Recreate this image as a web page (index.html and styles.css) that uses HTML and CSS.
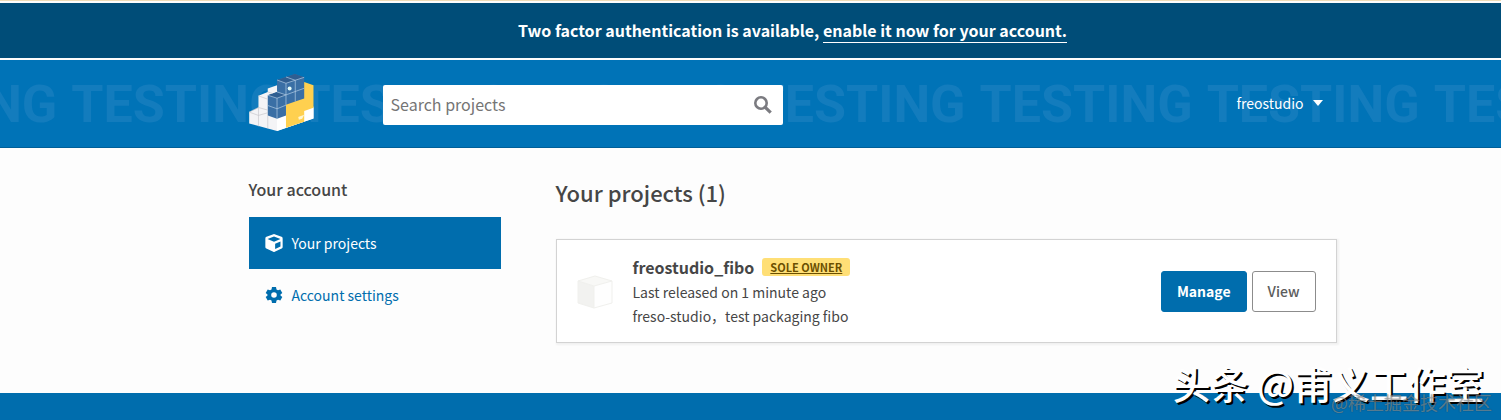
FILE: index.html
```html
<!DOCTYPE html>
<html lang="en">
<head>
    <meta charset="UTF-8">
    <meta name="viewport" content="width=device-width, initial-scale=1.0">
    <title>Your projects</title>
    <link rel="stylesheet" href="styles.css">
</head>
<body>
    <div class="banner">
        <p>Two factor authentication is available, <a href="#">enable it now for your account.</a></p>
    </div>

    <header class="header">
        <div class="testing" aria-hidden="true">
            <span>TESTING</span><span>TESTING</span><span>TESTING</span><span>TESTING</span>
            <span>TESTING</span><span>TESTING</span><span>TESTING</span><span>TESTING</span>
        </div>
        <div class="container header-row">
            <a class="logo" href="#" aria-label="Home">
                <svg viewBox="24 28 195 172" width="65" height="57">
                    <path fill="#f4f4f6" d="M24 143 52 129V94L80 82V72L108 62 190 130 218 130V162L108 200 24 177Z"/>
                    <path fill="#fff" d="M108 163 218 126V162L108 200Z"/>
                    <path fill="#ffd04f" d="M190 52 218 62V130L190 140V172L135 190V121Z"/>
                    <path fill="#3a6fa5" d="M80 92 108 82V46L162 28 190 38V102L163 111 135 121V153L108 163 80 153Z"/>
                    <path fill="#2f5e91" d="M80 92 108 82 135 91 108 101ZM108 46 162 28 190 38 135 56Z"/>
                    <g fill="none" stroke="#b9d2e8" stroke-width="2">
                        <path d="M80 92 108 101 135 91M108 101V163M80 123 108 133 135 122M108 46 135 56 190 38M135 37 163 47V111M135 56V121M135 91 190 71M108 82 135 91"/>
                    </g>
                    <path fill="none" stroke="#c5c5ca" stroke-width="2" d="M24 143 52 153 80 145M52 129V186M80 153V192M52 94 80 104M52 129 80 137M80 82 95 87M24 143 52 129"/>
                    <ellipse cx="146" cy="72" rx="6" ry="6" fill="#e4fbf8"/>
                    <path fill="#fff6cf" d="M172 158 190 151 184 163 174 166Z"/>
                </svg>
            </a>
            <form class="search" role="search">
                <input type="search" aria-label="Search projects" placeholder="Search projects">
                <button type="button" aria-label="Search">
                    <svg viewBox="0 0 18 18" width="18" height="18" fill="none" stroke="#7b7b80">
                        <circle cx="7" cy="7" r="5.7" stroke-width="2.6"/>
                        <path d="M11.3 11.3 16.7 16.7" stroke-width="3.2"/>
                    </svg>
                </button>
            </form>
            <button class="user" type="button">freostudio
                <svg viewBox="0 0 10 6" width="10" height="6"><path fill="#fff" d="M0 0H10L5 6Z"/></svg>
            </button>
        </div>
    </header>

    <main class="main">
        <div class="container columns">
            <nav class="sidebar" aria-label="Your account">
                <h2>Your account</h2>
                <a class="tab active" href="#">
                    <svg viewBox="0 0 512 512" width="18" height="18"><path fill="currentColor" d="M239 6 41 81Q10 93 10 126V370Q10 399 38 412L236 506Q256 516 276 506L474 412Q502 399 502 370V126Q502 93 471 81L273 6Q256 0 239 6ZM256 72 440 141V143L256 218 72 143V141ZM288 430V274L440 212V358Z"/></svg>
                    Your projects
                </a>
                <a class="tab" href="#">
                    <svg viewBox="0 0 18 18" width="18" height="18"><path fill="currentColor" fill-rule="evenodd" d="M7 1H11L11.5 3.4 13 4.2 15.3 3.5 17.3 7 15.5 8.5V9.5L17.3 11 15.3 14.5 13 13.8 11.5 14.6 11 17H7L6.500 14.600 5 13.800 2.700 14.500 .7 11 2.500 9.500V8.500L.7 7 2.700 3.500 5 4.200 6.500 3.400ZM9 6.200A2.800 2.800 0 1 0 9 11.800 2.800 2.800 0 1 0 9 6.200Z"/></svg>
                    Account settings
                </a>
            </nav>

            <section class="projects">
                <h1>Your projects (1)</h1>
                <article class="card">
                    <svg class="cube" viewBox="0 0 36 34" width="36" height="34">
                        <path fill="#f2f2f0" d="M1 6 17 11V33L1 28Z"/>
                        <path fill="#f8f8f6" d="M1 6 18 1 35 6 17 11Z"/>
                        <path fill="#fefefe" d="M17 11 35 6V28L17 33Z"/>
                        <path fill="none" stroke="#f0f0ed" d="M1 6 18 1 35 6V28L17 33 1 28ZM1 6 17 11 35 6M17 11V33"/>
                    </svg>
                    <div class="info">
                        <h3>freostudio_fibo <a class="badge" href="#">SOLE OWNER</a></h3>
                        <p>Last released on 1 minute ago</p>
                        <p>freso-studio，test packaging fibo</p>
                    </div>
                    <div class="actions">
                        <button class="btn primary" type="button">Manage</button>
                        <button class="btn" type="button">View</button>
                    </div>
                </article>
            </section>
        </div>
    </main>

    <footer class="footer"></footer>

    <div class="mark">头条 @甫义工作室</div>
    <div class="mark-small">@稀土掘金技术社区</div>
</body>
</html>
```
FILE: styles.css
```css
* {
    margin: 0;
    padding: 0;
    box-sizing: border-box;
}

body {
    min-height: 100vh;
    display: flex;
    flex-direction: column;
    position: relative;
    overflow: hidden;
    border-top: 1px solid #f0dcb8;
    background: #fdfdfd;
    color: #464646;
    font-family: "Noto Sans CJK SC", "Open Sans", sans-serif;
    font-size: 16px;
    line-height: 24px;
}

button, input {
    font: inherit;
}

.banner {
    margin: 2px 0;
    padding: 15px 0 16px 84px;
    background: #004d78;
    color: #fff;
    font-weight: bold;
    text-align: center;
}

.banner a {
    color: #fff;
    text-decoration: none;
    border-bottom: 1px solid #fff;
}

.header {
    position: relative;
    padding: 14px 0 16px 84px;
    background: #0073b7;
    border-bottom: 1px solid #005f98;
}

/* Repeating word behind the header */
.testing {
    position: absolute;
    inset: 0;
    padding: 2px 10px 0 0;
    display: flex;
    align-items: center;
    justify-content: center;
    gap: 14px;
    overflow: hidden;
    color: #137cbd;
    font: bold 52px Roboto, sans-serif;
}

.container {
    position: relative;
    width: 100%;
    max-width: 1088px;
    margin: 0 auto;
}

.header-row {
    display: flex;
    align-items: center;
    padding-right: 14px;
}

.logo svg {
    display: block;
}

.search {
    display: flex;
    width: 400px;
    height: 40px;
    margin: 4px 0 0 69px;
    background: #fff;
    border-radius: 2px;
}

.search input {
    flex: 1;
    min-width: 0;
    padding: 0 0 2px 8px;
    border: 0;
    background: none;
}

.search input::placeholder {
    color: #757575;
}

.search button {
    width: 40px;
    border: 0;
    background: none;
}

.search svg {
    display: block;
    margin: 0 auto;
}

.user {
    display: flex;
    align-items: center;
    gap: 9px;
    margin-left: auto;
    border: 0;
    background: none;
    color: #fff;
    font-size: 14px;
}

.main {
    padding: 29px 0 50px 84px;
}

.columns {
    display: grid;
    grid-template-columns: 252px 1fr;
    gap: 55px;
}

.sidebar h2 {
    margin-bottom: 16px;
    font-size: 16px;
    font-weight: 500;
}

.tab {
    display: flex;
    align-items: center;
    gap: 9px;
    height: 52px;
    padding-left: 16px;
    color: #006dad;
    font-size: 14px;
    text-decoration: none;
}

.tab.active {
    background: #006dad;
    color: #fff;
}

.projects h1 {
    margin-bottom: 32px;
    font-size: 22px;
    font-weight: 500;
    line-height: 30px;
}

.card {
    display: flex;
    align-items: center;
    padding: 15px 20px 14px;
    background: #fff;
    border: 1px solid #d3d3d3;
    box-shadow: 1px 1px 2px 1px rgba(0, 0, 0, 0.05);
}

.cube {
    margin-right: 20px;
}

.info {
    font-size: 14px;
}

.info h3 {
    display: flex;
    align-items: center;
    gap: 8px;
    margin-bottom: 1px;
    font-size: 16px;
    font-weight: bold;
}

.badge {
    padding: 0 8px;
    border-radius: 3px;
    background: #ffdf76;
    color: #6b4f00;
    font-size: 11px;
    line-height: 18px;
}

.actions {
    display: flex;
    gap: 5px;
    margin-left: auto;
}

.btn {
    padding: 7px 15px;
    border: 1px solid #8c8c8c;
    border-radius: 3px;
    background: #fff;
    color: #5c5c5c;
    font-size: 14px;
    font-weight: 500;
    line-height: 25px;
}

.btn.primary {
    border-color: #006dad;
    background: #006dad;
    color: #fff;
    font-weight: bold;
}

.footer {
    flex: 1;
    background: #006dad;
}

/* Watermarks over the page corner */
.mark {
    position: absolute;
    right: 17px;
    bottom: 13px;
    color: #fff;
    font-size: 38px;
    font-weight: 500;
    line-height: 48px;
    text-shadow: 2px 2px 0 #000;
}

.mark-small {
    position: absolute;
    right: 9px;
    bottom: 6px;
    color: rgba(255, 255, 255, 0.35);
    font-size: 18px;
    text-shadow: 0 0 1px rgba(0, 0, 0, 0.6);
}
```
